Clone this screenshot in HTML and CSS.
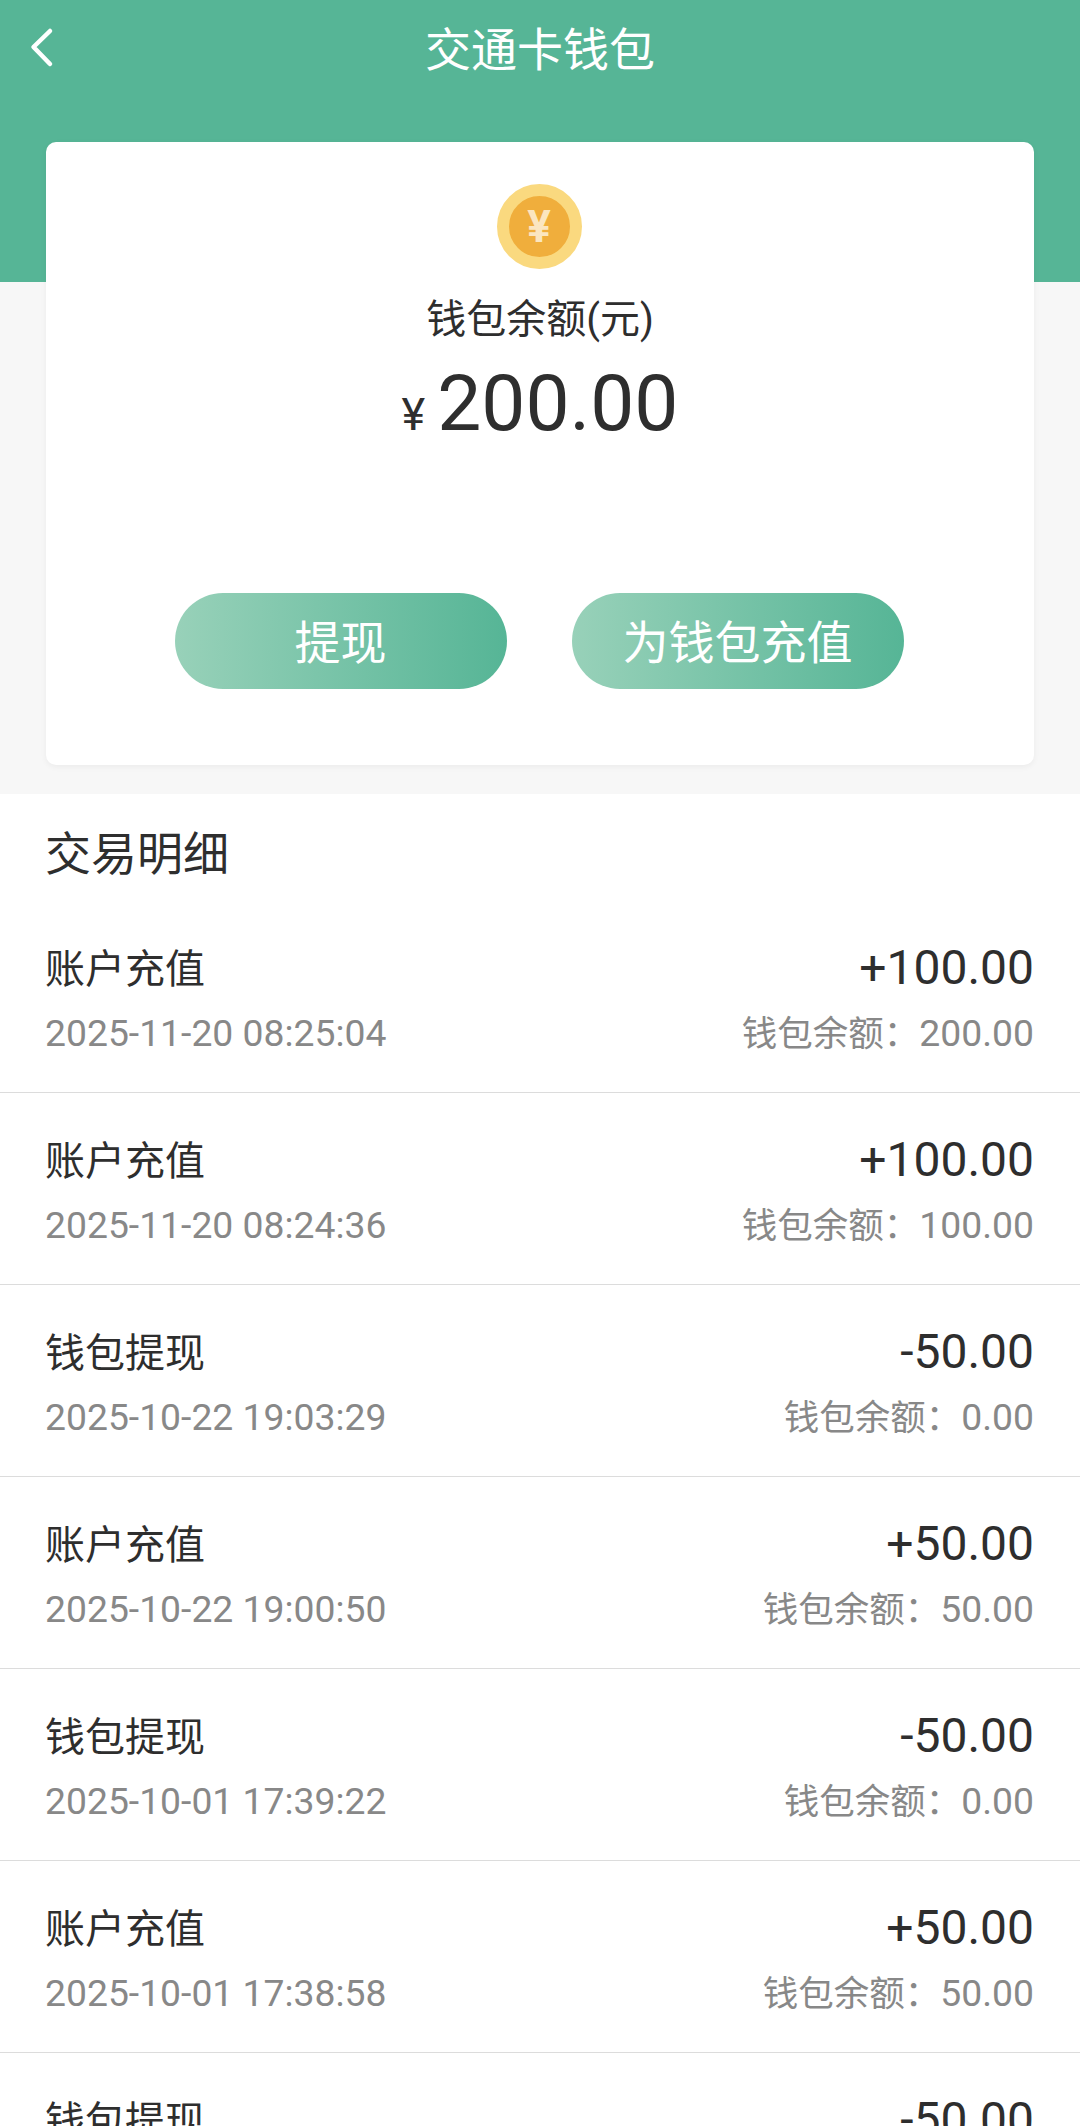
FILE: index.html
```html
<!DOCTYPE html>
<html lang="zh-CN">
<head>
    <meta charset="UTF-8">
    <meta name="viewport" content="width=device-width, initial-scale=1.0">
    <title>交通卡钱包</title>
    <link rel="stylesheet" href="styles.css">
</head>
<body>
    <header class="top">
        <div class="nav">
            <svg class="back" width="40" height="48" viewBox="0 0 40 48">
                <path d="M23 8 L6.500 24 L23 41" fill="none" stroke="#fff" stroke-width="4.5" stroke-linecap="round" stroke-linejoin="round"/>
            </svg>
            <h1>交通卡钱包</h1>
        </div>
    </header>

    <section class="card">
        <div class="coin"><span>¥</span></div>
        <div class="balance-label">钱包余额(元)</div>
        <div class="balance"><small>¥</small>200.00</div>
        <div class="actions">
            <button>提现</button>
            <button>为钱包充值</button>
        </div>
    </section>

    <section class="list">
        <h2>交易明细</h2>
        <div class="row">
            <div class="line"><span class="name">账户充值</span><span class="amount">+100.00</span></div>
            <div class="line sub"><span>2025-11-20 08:25:04</span><span><em>钱包余额：</em>200.00</span></div>
        </div>
        <div class="row">
            <div class="line"><span class="name">账户充值</span><span class="amount">+100.00</span></div>
            <div class="line sub"><span>2025-11-20 08:24:36</span><span><em>钱包余额：</em>100.00</span></div>
        </div>
        <div class="row">
            <div class="line"><span class="name">钱包提现</span><span class="amount">-50.00</span></div>
            <div class="line sub"><span>2025-10-22 19:03:29</span><span><em>钱包余额：</em>0.00</span></div>
        </div>
        <div class="row">
            <div class="line"><span class="name">账户充值</span><span class="amount">+50.00</span></div>
            <div class="line sub"><span>2025-10-22 19:00:50</span><span><em>钱包余额：</em>50.00</span></div>
        </div>
        <div class="row">
            <div class="line"><span class="name">钱包提现</span><span class="amount">-50.00</span></div>
            <div class="line sub"><span>2025-10-01 17:39:22</span><span><em>钱包余额：</em>0.00</span></div>
        </div>
        <div class="row">
            <div class="line"><span class="name">账户充值</span><span class="amount">+50.00</span></div>
            <div class="line sub"><span>2025-10-01 17:38:58</span><span><em>钱包余额：</em>50.00</span></div>
        </div>
        <div class="row">
            <div class="line"><span class="name">钱包提现</span><span class="amount">-50.00</span></div>
        </div>
    </section>
</body>
</html>
```

FILE: styles.css
```css
html, body {
    height: 2126px;
    overflow: hidden;
}
body {
    margin: 0;
    background-color: #f7f7f7;
    color: #2e2e2e;
    font-family: Roboto, "Noto Sans CJK SC", sans-serif;
}
.top {
    height: 282px;
    background-color: #56b596;
}
.nav {
    display: flex;
    align-items: center;
    justify-content: center;
    position: relative;
    height: 92px;
}
.back {
    position: absolute;
    left: 27px;
    top: 23px;
}
h1 {
    margin: 0;
    font-size: 46px;
    font-weight: 400;
    color: #fff;
}
.card {
    display: flex;
    flex-direction: column;
    align-items: center;
    box-sizing: border-box;
    height: 623px;
    margin: -140px 46px 29px;
    padding-top: 42px;
    background-color: #fff;
    border-radius: 10px;
    box-shadow: 0 2px 6px rgba(0, 0, 0, 0.05);
}
.coin {
    display: flex;
    align-items: center;
    justify-content: center;
    box-sizing: border-box;
    width: 85px;
    height: 85px;
    margin-right: 2px;
    border: 12px solid #fad97f;
    border-radius: 50%;
    background-color: #f0ae3c;
    color: #fbe6c0;
    font-size: 44px;
    font-weight: 700;
}
.balance-label {
    margin-top: 23px;
    font-size: 40px;
    line-height: 56px;
}
.balance {
    margin-top: 10px;
    font-size: 78.5px;
    line-height: 90px;
}
.balance small {
    margin-right: 12px;
    font-size: 45px;
}
.actions {
    display: flex;
    gap: 65px;
    margin-top: 133px;
    margin-right: 2px;
}
button {
    width: 332px;
    height: 96px;
    padding: 0 0 4px;
    border: none;
    border-radius: 48px;
    background: linear-gradient(to right, #98d1b9, #56b596);
    color: #fff;
    font-family: inherit;
    font-size: 46px;
}
.list {
    background-color: #fff;
}
h2 {
    box-sizing: border-box;
    height: 107px;
    margin: 0;
    padding: 7px 45px 0;
    font-size: 46px;
    font-weight: 400;
    line-height: 106px;
}
.row {
    box-sizing: border-box;
    height: 192px;
    padding: 37px 46px 0 45px;
    border-bottom: 1px solid #dcdcdc;
}
.line {
    display: flex;
    align-items: center;
    justify-content: space-between;
    height: 56px;
}
.name {
    font-size: 40px;
}
.amount {
    padding-top: 2px;
    font-size: 48px;
}
.sub {
    align-items: baseline;
    height: 50px;
    margin-top: 11px;
    color: #888;
    font-size: 37.3px;
}
.sub em {
    font-size: 35.5px;
    font-style: normal;
}
```
